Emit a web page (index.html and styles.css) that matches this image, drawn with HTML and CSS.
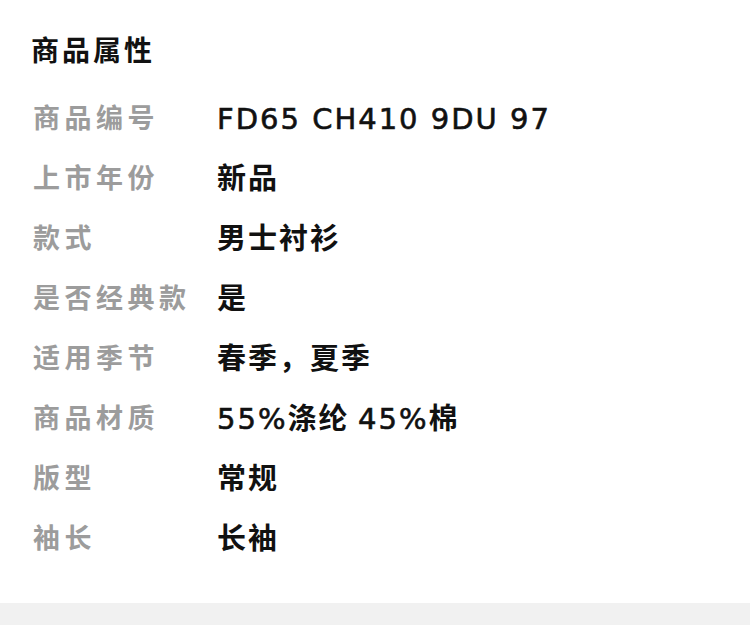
FILE: index.html
```html
<!DOCTYPE html>
<html lang="zh-CN">
<head>
<meta charset="utf-8">
<link rel="stylesheet" href="styles.css">
</head>
<body>
<section class="attrs">
  <h2 class="title">商品属性</h2>
  <div class="list">
    <div class="row"><span class="label">商品编号</span><span class="value"><span class="latin">FD65 CH410 9DU 97</span></span></div>
    <div class="row"><span class="label">上市年份</span><span class="value">新品</span></div>
    <div class="row"><span class="label">款式</span><span class="value">男士衬衫</span></div>
    <div class="row"><span class="label">是否经典款</span><span class="value">是</span></div>
    <div class="row"><span class="label">适用季节</span><span class="value">春季，夏季</span></div>
    <div class="row"><span class="label">商品材质</span><span class="value"><span class="latin">55%</span>涤纶 <span class="latin">45%</span>棉</span></div>
    <div class="row"><span class="label">版型</span><span class="value">常规</span></div>
    <div class="row"><span class="label">袖长</span><span class="value">长袖</span></div>
  </div>
</section>
<div class="footer-strip"></div>
</body>
</html>
```
FILE: styles.css
```css
html, body {
  margin: 0;
  padding: 0;
  background: #ffffff;
}
body {
  width: 750px;
  height: 625px;
  overflow: hidden;
  font-family: "Noto Sans CJK SC", "Noto Sans", sans-serif;
}
.attrs {
  height: 603px;
  padding: 0 31px;
  box-sizing: border-box;
}
.title {
  margin: 0;
  padding-top: 30px;
  height: 38px;
  line-height: 38px;
  font-size: 28px;
  font-weight: 700;
  letter-spacing: 3px;
  color: #111;
}
.list {
  display: flex;
  flex-direction: column;
  padding-top: 18px;
}
.row {
  display: flex;
  height: 60px;
  align-items: center;
  font-weight: 700;
}
.label {
  width: 186px;
  flex-shrink: 0;
  font-size: 27px;
  color: #9c9c9c;
  letter-spacing: 4.5px;
  padding-left: 2px;
  box-sizing: border-box;
}
.value {
  font-size: 29px;
  color: #111;
  letter-spacing: 2px;
}
.latin {
  font-family: "DejaVu Sans", sans-serif;
  font-weight: 400;
  -webkit-text-stroke: 0.6px #111;
}
.footer-strip {
  height: 22px;
  background: #f1f1f1;
}
```
